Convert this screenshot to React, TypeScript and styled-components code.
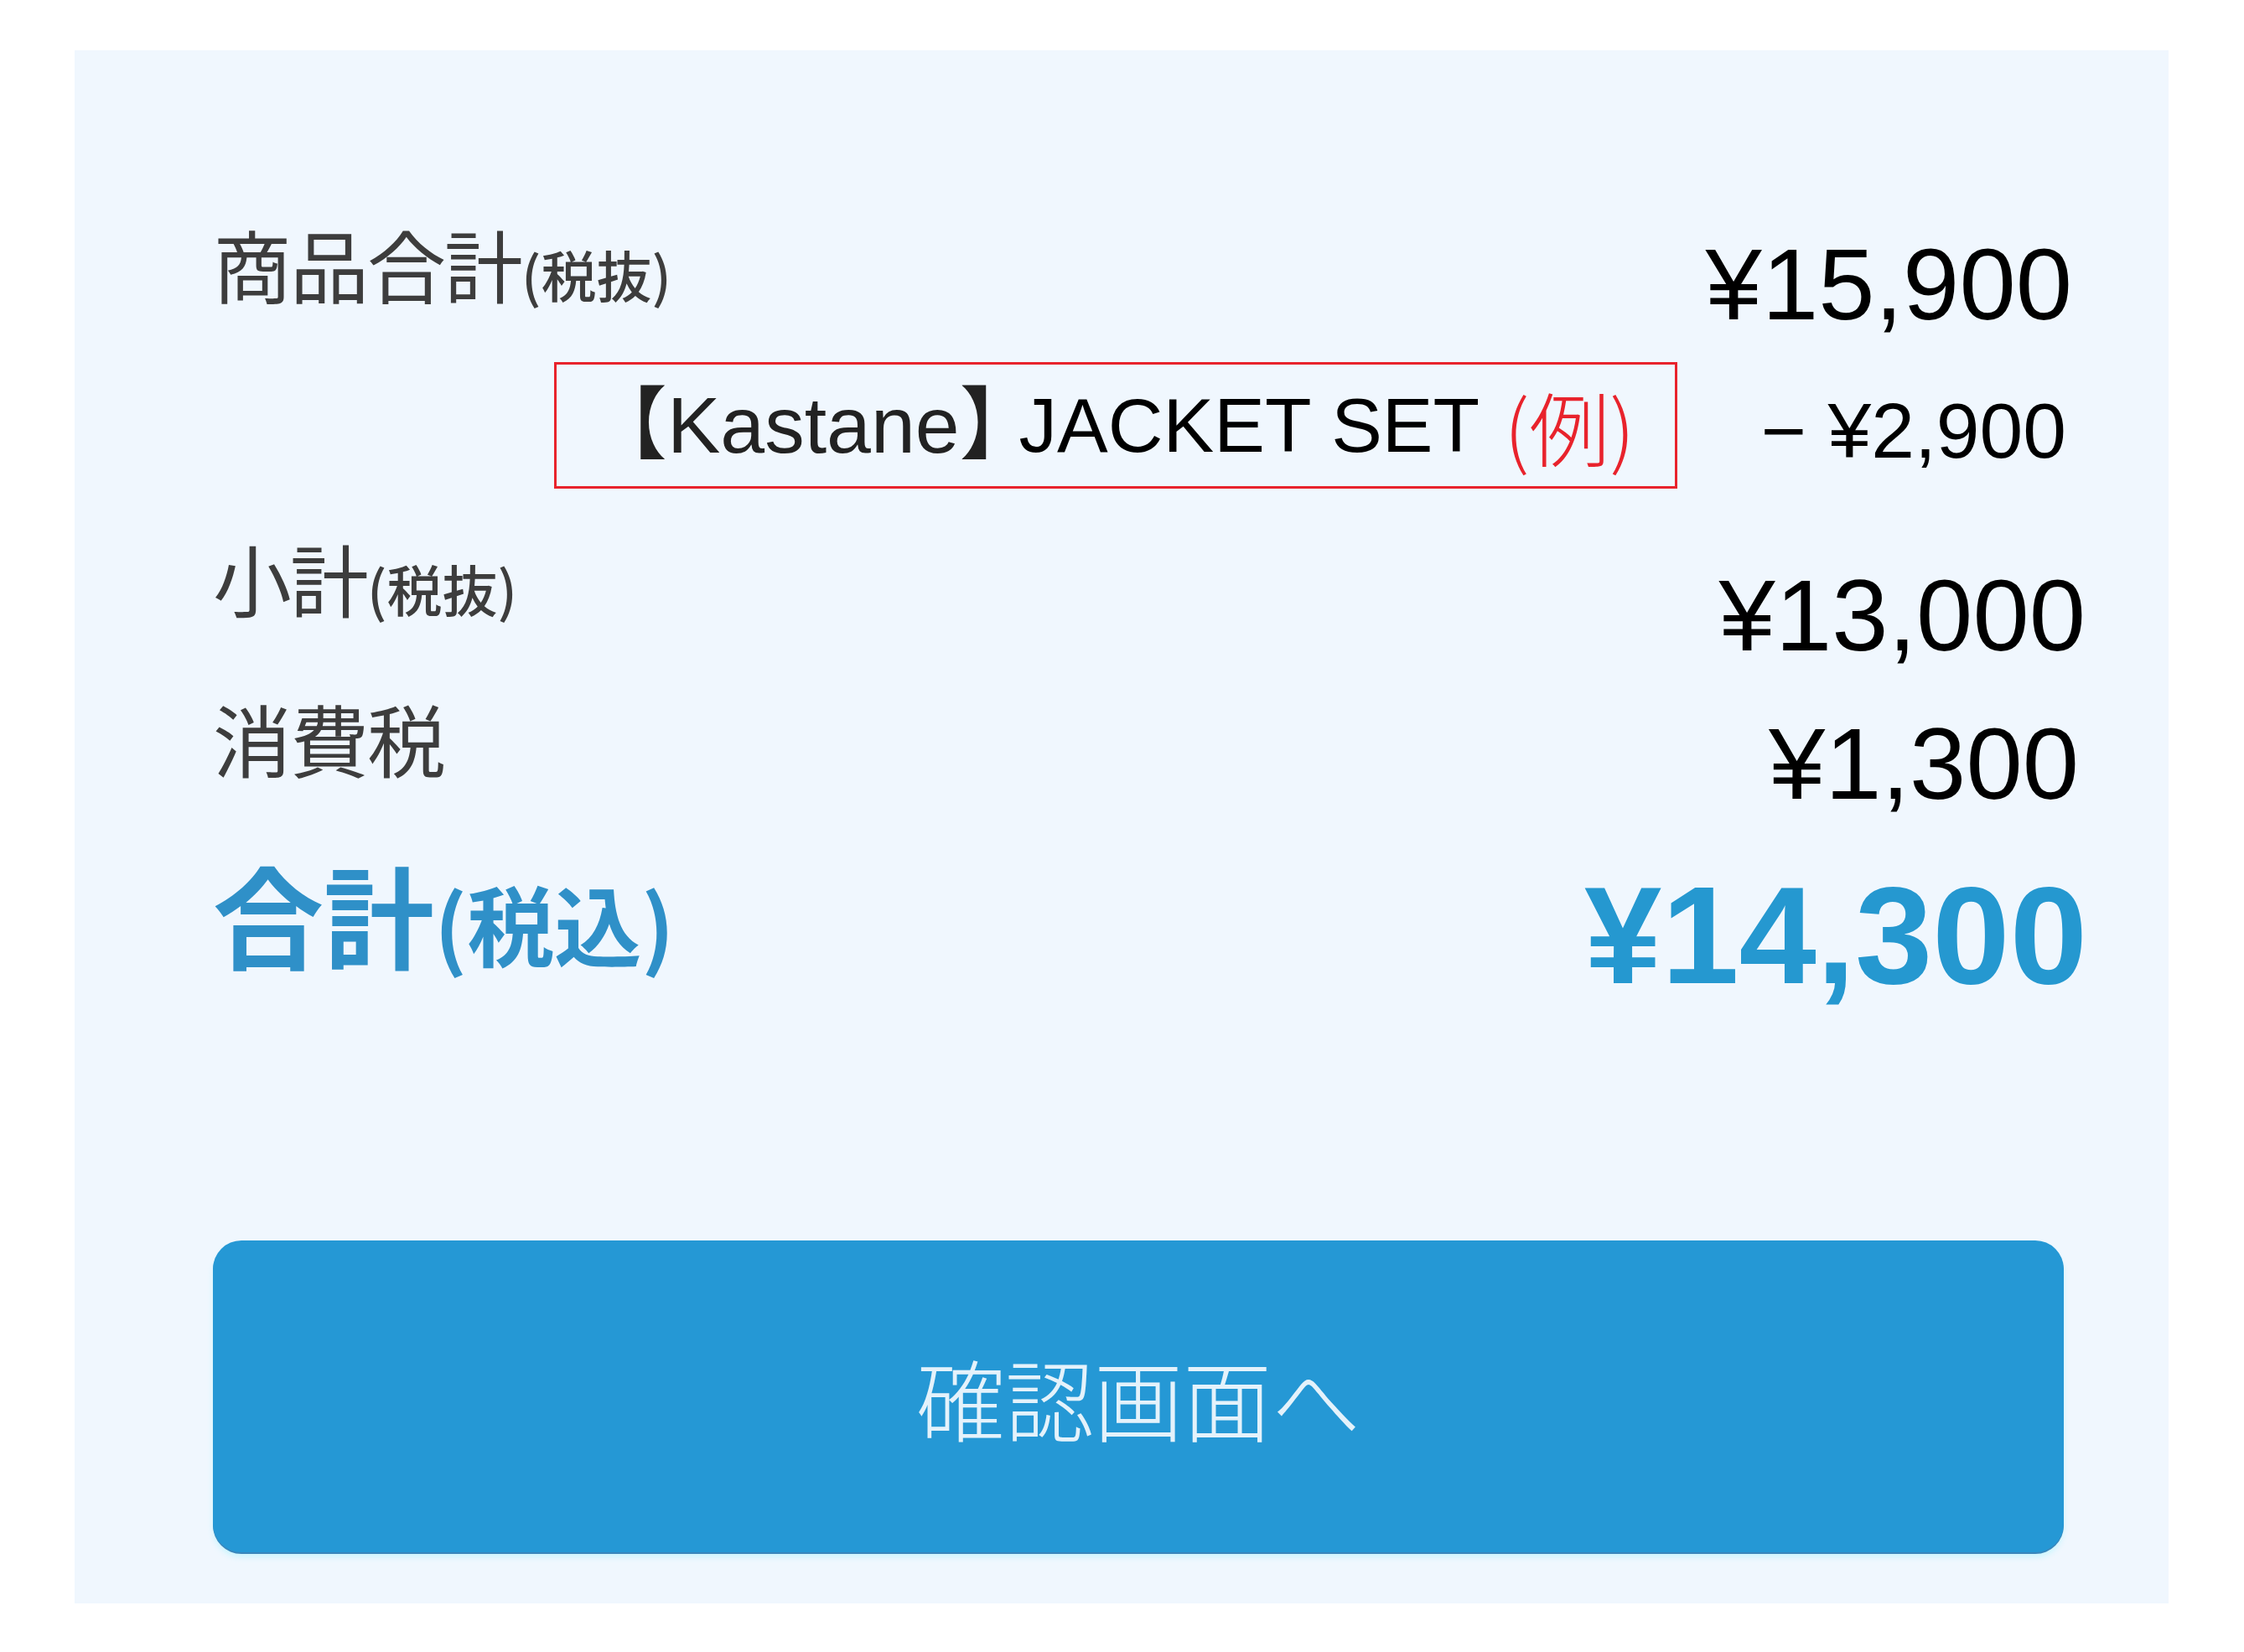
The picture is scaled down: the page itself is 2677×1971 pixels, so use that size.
import React from "react";
import styled, { createGlobalStyle, css } from "styled-components";

const Global = createGlobalStyle`
  html, body {
    margin: 0;
    padding: 0;
    background: #ffffff;
  }
  body {
    font-family: "Noto Sans CJK JP", "Liberation Sans", sans-serif;
  }
`;

const Page = styled.div`
  width: 2677px;
  min-height: 1971px;
  padding: 60px 0 0 89px;
  box-sizing: border-box;
`;

const Panel = styled.section`
  width: 2498px;
  height: 1853px;
  box-sizing: border-box;
  background: #f0f7fe;
  padding: 207px 97px 0 165px;
  display: flex;
  flex-direction: column;
`;

const Row = styled.div<{ $h: number }>`
  display: flex;
  justify-content: space-between;
  align-items: flex-start;
  height: ${(p) => p.$h}px;
  flex-shrink: 0;
`;

const Label = styled.div<{ $total?: boolean }>`
  font-family: "Noto Sans CJK JP", sans-serif;
  font-size: 94px;
  line-height: 1;
  letter-spacing: -2px;
  color: #3d3d3d;
  white-space: nowrap;
  ${(p) =>
    p.$total &&
    css`
      font-size: 132px;
      font-weight: 700;
      letter-spacing: 0;
      color: #2f90c8;
    `}
`;

const Note = styled.span<{ $total?: boolean }>`
  font-size: ${(p) => (p.$total ? 104 : 66)}px;
  font-weight: ${(p) => (p.$total ? 700 : 500)};
  letter-spacing: 0;
`;

const Amount = styled.div<{ $dy: number; $inset?: number; $total?: boolean }>`
  font-family: "Liberation Sans", Arial, sans-serif;
  font-size: 121px;
  line-height: 1;
  color: #000;
  white-space: nowrap;
  margin-top: ${(p) => p.$dy}px;
  margin-right: ${(p) => p.$inset ?? 0}px;
  ${(p) =>
    p.$total &&
    css`
      font-size: 166px;
      font-weight: 700;
      color: #2598d0;
    `}
`;

const Discount = styled(Amount)`
  font-size: 93px;
`;

const CouponBox = styled.div`
  margin-left: 407px;
  width: 1340px;
  height: 151px;
  box-sizing: border-box;
  border: 3px solid #e8232c;
  display: flex;
  align-items: center;
  padding-left: 37px;
  white-space: nowrap;
`;

const Brand = styled.span`
  font-family: "Liberation Sans", "Noto Sans CJK JP", sans-serif;
  font-size: 95px;
  line-height: 1;
  color: #222;
`;

const Product = styled.span`
  font-family: "Liberation Sans", Arial, sans-serif;
  font-size: 91px;
  line-height: 1;
  color: #000;
  margin-left: -24px;
`;

const Example = styled.span`
  font-family: "Noto Sans CJK JP", sans-serif;
  font-size: 96px;
  font-weight: 300;
  line-height: 1;
  color: #e8232c;
  margin-left: 29px;
`;

const ConfirmButton = styled.button`
  margin-top: auto;
  margin-bottom: 61px;
  margin-right: 28px;
  height: 372px;
  border: none;
  border-radius: 34px;
  background: #2598d5;
  box-shadow: 0 2px 0 #3a86bb, 0 6px 6px rgba(190, 245, 255, 0.7);
  color: #e4f2fb;
  font-family: "Noto Sans CJK JP", sans-serif;
  font-size: 106px;
  font-weight: 300;
  letter-spacing: 0;
  cursor: pointer;
  display: flex;
  align-items: center;
  justify-content: center;
`;

export default function App() {
  return (
    <>
      <Global />
      <Page>
        <Panel>
          <Row $h={165}>
            <Label>
              商品合計<Note>(税抜)</Note>
            </Label>
            <Amount $dy={12} $inset={18}>¥15,900</Amount>
          </Row>
          <Row $h={210}>
            <CouponBox>
              <Brand>【Kastane】</Brand>
              <Product>JACKET SET</Product>
              <Example>(例)</Example>
            </CouponBox>
            <Discount $dy={36} $inset={25}>− ¥2,900</Discount>
          </Row>
          <Row $h={191}>
            <Label>
              小計<Note>(税抜)</Note>
            </Label>
            <Amount $dy={32} $inset={2}>¥13,000</Amount>
          </Row>
          <Row $h={190}>
            <Label>消費税</Label>
            <Amount $dy={18} $inset={10}>¥1,300</Amount>
          </Row>
          <Row $h={200}>
            <Label $total>
              合計<Note $total>(税込)</Note>
            </Label>
            <Amount $dy={10} $total>¥14,300</Amount>
          </Row>
          <ConfirmButton>確認画面へ</ConfirmButton>
        </Panel>
      </Page>
    </>
  );
}
